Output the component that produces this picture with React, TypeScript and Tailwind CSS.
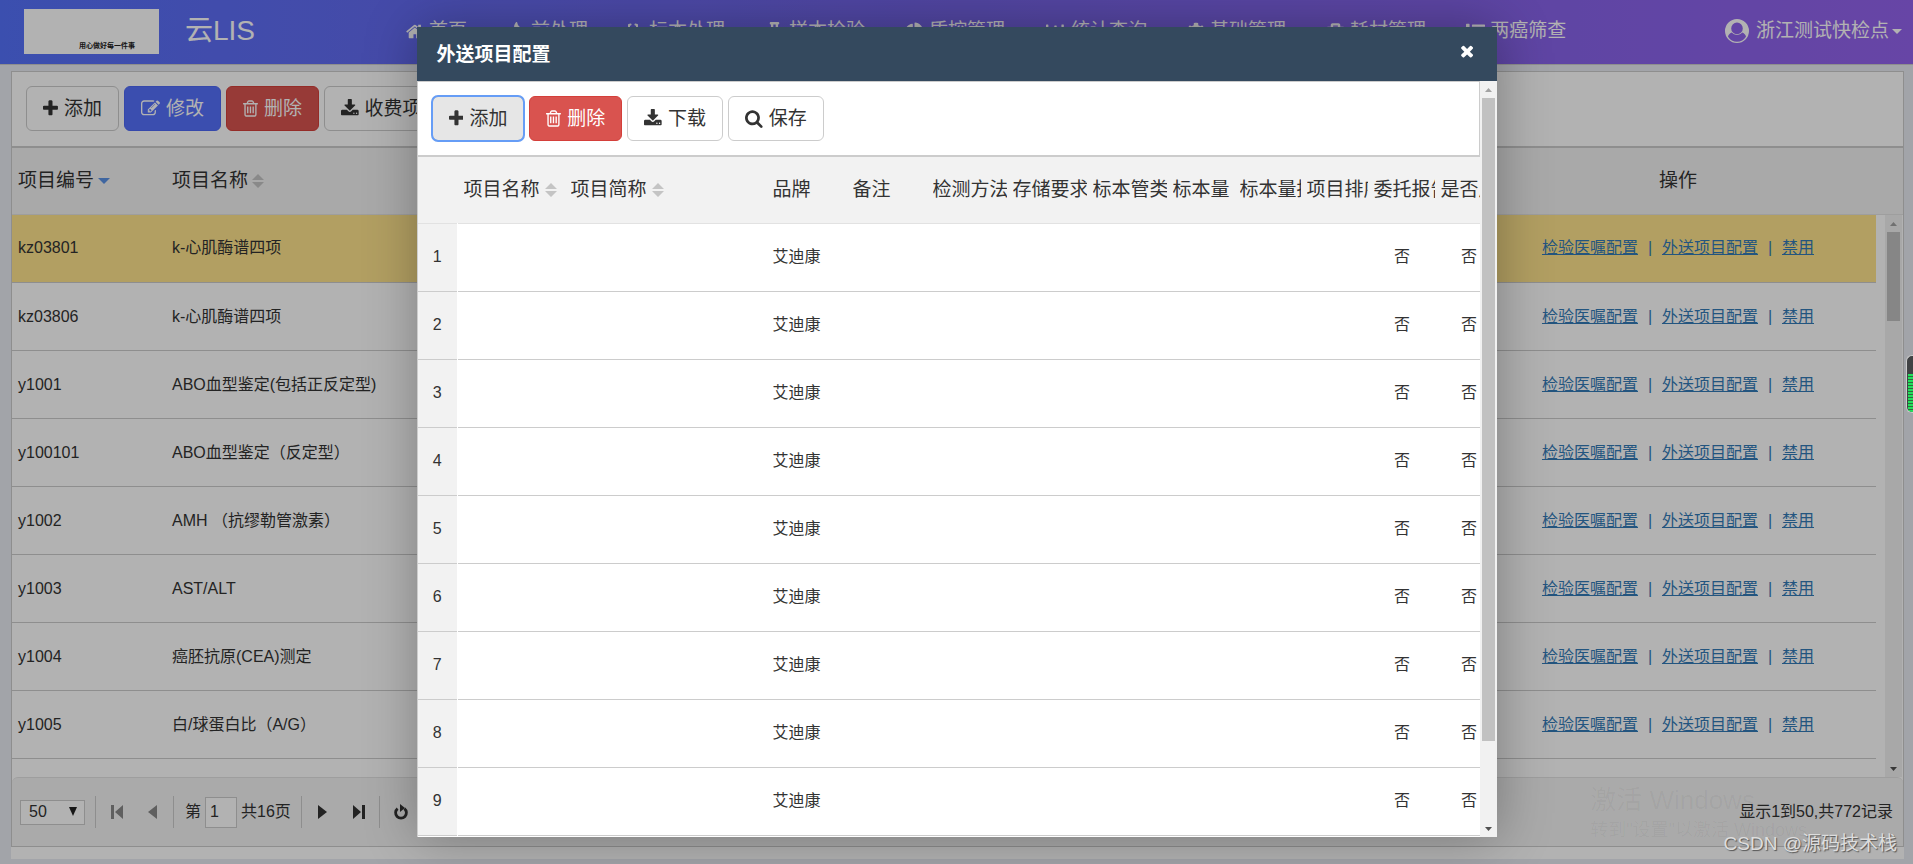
import React from "react";
import { FaFire, FaFlask, FaChartPie, FaChartBar, FaCog, FaBriefcase, FaList, FaStethoscope } from "react-icons/fa";

const PATHS = {
  plus: { box: "192 0 1408 1792", d: "M1600 736v192q0 40-28 68t-68 28h-416v416q0 40-28 68t-68 28h-192q-40 0-68-28t-28-68v-416h-416q-40 0-68-28t-28-68v-192q0-40 28-68t68-28h416v-416q0-40 28-68t68-28h192q40 0 68 28t28 68v416h416q40 0 68 28t28 68z" },
  edit: { box: "0 0 1792 1792", d: "M888 1184l116-116-152-152-116 116v56h96v96h56zm440-720q-16-16-33 1l-350 350q-17 17-1 33t33-1l350-350q17-17 1-33zm80 594v190q0 119-84.5 203.5t-203.5 84.5h-832q-119 0-203.5-84.5t-84.5-203.5v-832q0-119 84.5-203.5t203.5-84.5h832q63 0 117 25 15 7 18 23 3 17-9 29l-49 49q-14 14-32 8-23-6-45-6h-832q-66 0-113 47t-47 113v832q0 66 47 113t113 47h832q66 0 113-47t47-113v-126q0-13 9-22l64-64q15-15 35-7t20 29zm-96-738l288 288-672 672h-288v-288zm444 132l-92 92-288-288 92-92q28-28 68-28t68 28l152 152q28 28 28 68t-28 68z" },
  trash: { box: "192 0 1408 1792", d: "M704 736v576q0 14-9 23t-23 9h-64q-14 0-23-9t-9-23v-576q0-14 9-23t23-9h64q14 0 23 9t9 23zm256 0v576q0 14-9 23t-23 9h-64q-14 0-23-9t-9-23v-576q0-14 9-23t23-9h64q14 0 23 9t9 23zm256 0v576q0 14-9 23t-23 9h-64q-14 0-23-9t-9-23v-576q0-14 9-23t23-9h64q14 0 23 9t9 23zm128 724v-948h-896v948q0 22 7 40.5t14.5 27 10.5 8.5h832q3 0 10.5-8.5t14.5-27 7-40.5zm-672-1076h448l-48-117q-7-9-17-11h-317q-10 2-17 11zm928 32v64q0 14-9 23t-23 9h-96v948q0 83-47 143.5t-113 60.5h-832q-66 0-113-58.5t-47-141.5v-952h-96q-14 0-23-9t-9-23v-64q0-14 9-23t23-9h309l70-167q15-37 54-63t79-26h320q40 0 79 26t54 63l70 167h309q14 0 23 9t9 23z" },
  download: { box: "64 0 1664 1792", d: "M1344 1344q0-26-19-45t-45-19-45 19-19 45 19 45 45 19 45-19 19-45zm256 0q0-26-19-45t-45-19-45 19-19 45 19 45 45 19 45-19 19-45zm128-224v320q0 40-28 68t-68 28h-1472q-40 0-68-28t-28-68v-320q0-40 28-68t68-28h465l135 136q58 56 136 56t136-56l136-136h464q40 0 68 28t28 68zm-325-569q17 41-14 70l-448 448q-18 19-45 19t-45-19l-448-448q-31-29-14-70 17-39 59-39h256v-448q0-26 19-45t45-19h256q26 0 45 19t19 45v448h256q42 0 59 39z" },
  search: { box: "64 0 1664 1792", d: "M1216 832q0-185-131.5-316.5t-316.5-131.5-316.5 131.5-131.5 316.5 131.5 316.5 316.5 131.5 316.5-131.5 131.5-316.5zm512 832q0 52-38 90t-90 38q-54 0-90-38l-343-342q-179 124-399 124-143 0-273.5-55.5t-225-150-150-225-55.5-273.5 55.5-273.5 150-225 225-150 273.5-55.5 273.5 55.5 225 150 150 225 55.5 273.5q0 220-124 399l343 343q37 37 37 90z" },
  home: { box: "64 0 1664 1792", d: "M1472 992v480q0 26-19 45t-45 19h-384v-384h-256v384h-384q-26 0-45-19t-19-45v-480q0-1 .5-3t.5-3l575-474 575 474q1 2 1 6zm223-69l-62 74q-8 9-21 11h-3q-13 0-21-7l-692-577-692 577q-12 8-24 7-13-2-21-11l-62-74q-8-10-7-23.5t11-21.5l719-599q32-26 76-26t76 26l244 204v-195q0-14 9-23t23-9h192q14 0 23 9t9 23v408l219 182q10 8 11 21.5t-7 23.5z" },
  times: { box: "192 200 1408 1392", d: "M1490 1322q0 40-28 68l-136 136q-28 28-68 28t-68-28l-294-294-294 294q-28 28-68 28t-68-28l-136-136q-28-28-28-68t28-68l294-294-294-294q-28-28-28-68t28-68l136-136q28-28 68-28t68 28l294 294 294-294q28-28 68-28t68 28l136 136q28 28 28 68t-28 68l-294 294 294 294q28 28 28 68z" },
};

function Icon({ name, className = "h-[19px]" }: { name: keyof typeof PATHS; className?: string }) {
  return (
    <svg viewBox={PATHS[name].box} className={`${className} w-auto shrink-0 fill-current`} aria-hidden="true">
      <path d={PATHS[name].d} />
    </svg>
  );
}

const VARIANTS = {
  plain: "border-[#ccc] bg-white text-[#333]",
  primary: "border-[#4d68f5] bg-[#5570fb] text-white",
  danger: "border-[#d43f3a] bg-[#d9534f] text-white",
  focused: "border-[#adadad] bg-[#e6e6e6] text-[#333] outline-2 outline-offset-[-1px] outline-[#669df6]",
};

function ToolButton({ icon, label, variant = "plain" }: { icon: keyof typeof PATHS; label: string; variant?: keyof typeof VARIANTS }) {
  return (
    <button type="button" className={`flex h-[45px] items-center gap-1.5 rounded-md border px-4 text-[19px] leading-7 whitespace-nowrap ${VARIANTS[variant]}`}>
      <Icon name={icon} />
      {label}
    </button>
  );
}

function SortIcon() {
  return (
    <svg viewBox="0 0 12 14" className="h-3.5 w-3 shrink-0 fill-[#c4c4c4]" aria-hidden="true">
      <path d="M6 0l6 6H0zM6 14l6-6H0z" />
    </svg>
  );
}

const NAV = [
  { label: "首页", icon: <Icon name="home" />, w: "w-[18px]" },
  { label: "前处理", icon: <FaFire />, w: "w-[19px]" },
  { label: "标本处理", icon: <FaStethoscope />, w: "w-4" },
  { label: "样本检验", icon: <FaFlask />, w: "w-[19px]" },
  { label: "质控管理", icon: <FaChartPie />, w: "w-[19px]" },
  { label: "统计查询", icon: <FaChartBar />, w: "w-[21px]" },
  { label: "基础管理", icon: <FaCog />, w: "w-[18px]" },
  { label: "耗材管理", icon: <FaBriefcase />, w: "w-[19px]" },
  { label: "两癌筛查", icon: <FaList />, w: "w-[19px]" },
];

const ITEMS = [
  ["kz03801", "k-心肌酶谱四项"],
  ["kz03806", "k-心肌酶谱四项"],
  ["y1001", "ABO血型鉴定(包括正反定型)"],
  ["y100101", "ABO血型鉴定（反定型）"],
  ["y1002", "AMH （抗缪勒管激素）"],
  ["y1003", "AST/ALT"],
  ["y1004", "癌胚抗原(CEA)测定"],
  ["y1005", "白/球蛋白比（A/G）"],
];

function Header() {
  return (
    <header className="flex h-[65px] shrink-0 items-center border-b border-[#ccc] bg-linear-to-r from-[#5571fb] via-[#7463e6] to-[#9463ee] pr-[11px] pb-0.5 pl-6 text-white">
      <div className="flex h-[45px] w-[135px] shrink-0 items-end justify-end bg-white pr-6 pb-1 text-[7px] leading-2 font-bold text-[#222]">
        用心做好每一件事
      </div>
      <div className="ml-[26px] w-[201px] shrink-0 text-[28px] leading-10">云LIS</div>
      <nav className="flex text-[19px] leading-7">
        {NAV.map((n) => (
          <a key={n.label} href="#" className="flex items-center gap-[5px] px-5 whitespace-nowrap">
            <span className={`flex shrink-0 justify-center ${n.w}`}>{n.icon}</span>
            {n.label}
          </a>
        ))}
      </nav>
      <button type="button" className="ml-auto flex items-center text-[19px] leading-7 whitespace-nowrap">
        <svg viewBox="0 0 24 24" className="mr-[7px] size-6" aria-hidden="true">
          <path
            fill="currentColor"
            fillRule="evenodd"
            d="M12 0a12 12 0 1 1 0 24a12 12 0 0 1 0-24zM12 3.6a5.8 5.8 0 1 0 0 11.6a5.8 5.8 0 0 0 0-11.6zM6.6 13.6c-1.9.8-3.2 2.3-3.6 4.2a10.6 10.6 0 0 0 18 0c-.4-1.9-1.7-3.4-3.6-4.2a7.2 7.2 0 0 1-10.8 0z"
          />
        </svg>
        浙江测试快检点
        <svg viewBox="0 0 10 5" className="ml-[3px] h-[5px] w-2.5 fill-current" aria-hidden="true">
          <path d="M0 0h10l-5 5z" />
        </svg>
      </button>
    </header>
  );
}

function Scrollbar({ thumb }: { thumb: string }) {
  return (
    <div className="flex w-[17px] shrink-0 flex-col items-center bg-[#f1f1f1]" aria-hidden="true">
      <svg viewBox="0 0 17 17" className="size-[17px] shrink-0 fill-[#a3a3a3]">
        <path d="M5 11l3.5-4L12 11z" />
      </svg>
      <div className="min-h-0 w-full flex-1">
        <div className={`mx-0.5 bg-[#c1c1c1] ${thumb}`} />
      </div>
      <svg viewBox="0 0 17 17" className="size-[17px] shrink-0 fill-[#505050]">
        <path d="M5 7h7l-3.5 4z" />
      </svg>
    </div>
  );
}

function Pager() {
  const sep = <span className="h-8 w-px bg-[#ccc]" />;
  return (
    <div className="flex h-[69px] shrink-0 items-center rounded-t-md border-t border-[#e2e2e2] bg-[#f4f4f4] pr-2.5 pl-2 text-[16px] leading-6 text-[#333]">
      <div className="relative mr-2.5">
        <select aria-label="每页条数" className="block h-[25px] w-[65px] appearance-none border border-[#ccc] bg-white pl-2 text-[16px] leading-[22px]" defaultValue="50">
          <option>50</option>
        </select>
        <svg viewBox="0 0 8 9" className="pointer-events-none absolute top-[7px] right-2 h-[9px] w-2 fill-[#222]" aria-hidden="true">
          <path d="M0 0h8L4 9z" />
        </svg>
      </div>
      {sep}
      <button type="button" aria-label="首页" className="ml-[15px] text-[#888]">
        <svg viewBox="0 0 12 14" className="h-3.5 w-3 fill-current"><path d="M0 0h3v14H0zM12 0v14L4 7z" /></svg>
      </button>
      <button type="button" aria-label="上一页" className="mr-4 ml-[25px] text-[#888]">
        <svg viewBox="0 0 9 14" className="h-3.5 w-[9px] fill-current"><path d="M9 0v14L0 7z" /></svg>
      </button>
      {sep}
      <label className="ml-[11px] flex items-center gap-1">
        第
        <input defaultValue="1" className="h-[31px] w-8 border border-[#ccc] bg-white pl-1 text-[16px]" />
        共16页
      </label>
      <span className="mr-4 ml-2.5 h-8 w-px bg-[#ccc]" />
      <button type="button" aria-label="下一页">
        <svg viewBox="0 0 9 14" className="h-3.5 w-[9px] fill-current"><path d="M0 0v14l9-7z" /></svg>
      </button>
      <button type="button" aria-label="末页" className="mr-[14px] ml-[26px]">
        <svg viewBox="0 0 12 14" className="h-3.5 w-3 fill-current"><path d="M9 0h3v14H9zM0 0v14l8-7z" /></svg>
      </button>
      {sep}
      <button type="button" aria-label="刷新" className="ml-3.5">
        <svg viewBox="0 0 14 16" className="h-4 w-3.5">
          <path d="M3.6 4.6a5.4 5.4 0 1 0 6.8 0" fill="none" stroke="currentColor" strokeWidth="2.8" />
          <path d="M6 0l5 4-5 4z" fill="currentColor" />
        </svg>
      </button>
      <span className="ml-auto">显示1到50,共772记录</span>
    </div>
  );
}

function ItemPanel() {
  return (
    <main className="mt-1.5 mr-[9px] mb-[5px] ml-[11px] flex min-h-0 flex-1 flex-col bg-white pb-3">
      <div className="flex min-h-0 flex-1 flex-col border border-[#ccc]">
        <div className="flex shrink-0 gap-[5px] border-b-2 border-[#ccc] px-3.5 pt-3.5 pb-[15px]">
          <ToolButton icon="plus" label="添加" />
          <ToolButton icon="edit" label="修改" variant="primary" />
          <ToolButton icon="trash" label="删除" variant="danger" />
          <ToolButton icon="download" label="收费项目下载" />
        </div>
        <table className="w-full shrink-0 table-fixed bg-[#f2f2f2] text-[19px] leading-7 text-[#333]">
          <thead>
            <tr className="h-[66px] border-b border-[#e2e2e2]">
              <th className="w-[154px] p-0 pl-1.5 text-left font-normal">
                <span className="flex items-center gap-1">
                  项目编号
                  <svg viewBox="0 0 12 6" className="h-1.5 w-3 fill-[#5b92e5]" aria-hidden="true"><path d="M0 0h12L6 6z" /></svg>
                </span>
              </th>
              <th className="p-0 pl-1.5 text-left font-normal">
                <span className="flex items-center gap-1">项目名称<SortIcon /></span>
              </th>
              <th className="w-[396px] p-0 text-center font-normal">操作</th>
              <th className="w-[27px] p-0" />
            </tr>
          </thead>
        </table>
        <div className="flex min-h-0 flex-1 overflow-hidden pr-px">
          <div className="mr-[9px] min-w-0 flex-1">
            <table className="w-full table-fixed text-[16px] leading-6 text-[#333]">
              <tbody>
                {ITEMS.map(([code, name], i) => (
                  <tr key={code} className={`h-[68px] border-b border-[#ccc] ${i === 0 ? "bg-[#ffe48d]" : ""}`}>
                    <td className="w-[154px] p-0 pl-1.5">{code}</td>
                    <td className="p-0 pl-1.5">{name}</td>
                    <td className="w-[396px] p-0">
                      <div className="flex justify-center text-[#337ab7]">
                        <a href="#" className="underline">检验医嘱配置</a>
                        <span className="w-6 text-center">|</span>
                        <a href="#" className="underline">外送项目配置</a>
                        <span className="w-6 text-center">|</span>
                        <a href="#" className="underline">禁用</a>
                      </div>
                    </td>
                  </tr>
                ))}
              </tbody>
            </table>
          </div>
          <Scrollbar thumb="h-[17%]" />
        </div>
        <Pager />
      </div>
    </main>
  );
}

const COLUMNS = [
  { label: "", w: "w-10" },
  { label: "项目名称", w: "w-[107px]", sort: true },
  { label: "项目简称", w: "w-[202px]", sort: true },
  { label: "品牌", w: "w-20" },
  { label: "备注", w: "w-20" },
  { label: "检测方法", w: "w-20" },
  { label: "存储要求", w: "w-20" },
  { label: "标本管类", w: "w-20" },
  { label: "标本量", w: "w-[67px]" },
  { label: "标本量描述", w: "w-[67px]" },
  { label: "项目排序", w: "w-[67px]" },
  { label: "委托报告", w: "w-[67px]" },
  { label: "是否启用", w: "w-[67px]" },
];

function ConfigDialog() {
  return (
    <section role="dialog" aria-label="外送项目配置" className="flex h-[810px] max-h-full w-[1080px] max-w-full flex-col bg-white shadow-[1px_1px_50px_rgba(0,0,0,0.3)]">
      <div className="flex h-[54px] shrink-0 items-center justify-between bg-[#34495e] pt-0.5 pr-[22px] pl-5 text-white">
        <h2 className="text-[19px] leading-7 font-bold">外送项目配置</h2>
        <button type="button" aria-label="关闭" className="mb-2">
          <Icon name="times" className="h-[14px]" />
        </button>
      </div>
      <div className="flex min-h-0 flex-1">
        <div className="min-w-0 flex-1 overflow-hidden border-l border-[#ccc]">
          <div className="flex gap-[5px] border-t border-r border-b-2 border-[#ccc] p-3.5">
            <ToolButton icon="plus" label="添加" variant="focused" />
            <ToolButton icon="trash" label="删除" variant="danger" />
            <ToolButton icon="download" label="下载" />
            <ToolButton icon="search" label="保存" />
          </div>
          <table className="w-[1084px] table-fixed text-[#333]">
            <thead>
              <tr className="h-[66px] border-b border-[#e2e2e2] bg-[#f2f2f2] text-[19px] leading-7">
                {COLUMNS.map((c, i) => (
                  <th key={i} className={`${c.w} overflow-hidden p-0 pl-1.5 text-left font-normal whitespace-nowrap`}>
                    <span className="flex items-center gap-[5px] overflow-hidden">
                      {c.label}
                      {c.sort && <SortIcon />}
                    </span>
                  </th>
                ))}
              </tr>
            </thead>
            <tbody className="text-[16px] leading-6">
              {[1, 2, 3, 4, 5, 6, 7, 8, 9].map((n) => (
                <tr key={n} className="h-[68px] border-b border-[#ccc]">
                  <td className="border-r border-white bg-[#f2f2f2] p-0 text-center">{n}</td>
                  <td />
                  <td />
                  <td className="p-0 pl-1.5">艾迪康</td>
                  <td colSpan={7} />
                  <td className="p-0 pl-0.5 text-center">否</td>
                  <td className="p-0 pl-0.5 text-center">否</td>
                </tr>
              ))}
            </tbody>
          </table>
        </div>
        <Scrollbar thumb="h-[89%]" />
      </div>
    </section>
  );
}

export default function App() {
  return (
    <div className="relative flex h-screen flex-col overflow-hidden bg-[#e9ebf2] font-['Liberation_Sans','Noto_Sans_CJK_SC',sans-serif]">
      <Header />
      <ItemPanel />
      <div className="absolute inset-0 flex items-center justify-center bg-black/30">
        <ConfigDialog />
      </div>
      <div className="pointer-events-none absolute right-[106px] bottom-5 text-[18px] leading-7 whitespace-nowrap text-black/4">
        <div className="text-[26px] leading-8">激活 Windows</div>
        <div>转到"设置"以激活 Windows</div>
      </div>
      <div className="pointer-events-none absolute right-4 bottom-1.5 text-[19px] leading-7 whitespace-nowrap text-[#ddd] [text-shadow:1px_1px_1px_#555]">
        CSDN @源码技术栈
      </div>
      <div className="absolute top-[355px] right-0 flex h-[58px] w-[7px] flex-col overflow-hidden rounded-l-md border-y border-l border-[#ccc] bg-[#404244] pt-[18px] pl-px" aria-hidden="true">
        <div className="flex-1 bg-[repeating-linear-gradient(#22e05c_0_2px,#2c6b3e_2px_3px)]" />
      </div>
    </div>
  );
}
